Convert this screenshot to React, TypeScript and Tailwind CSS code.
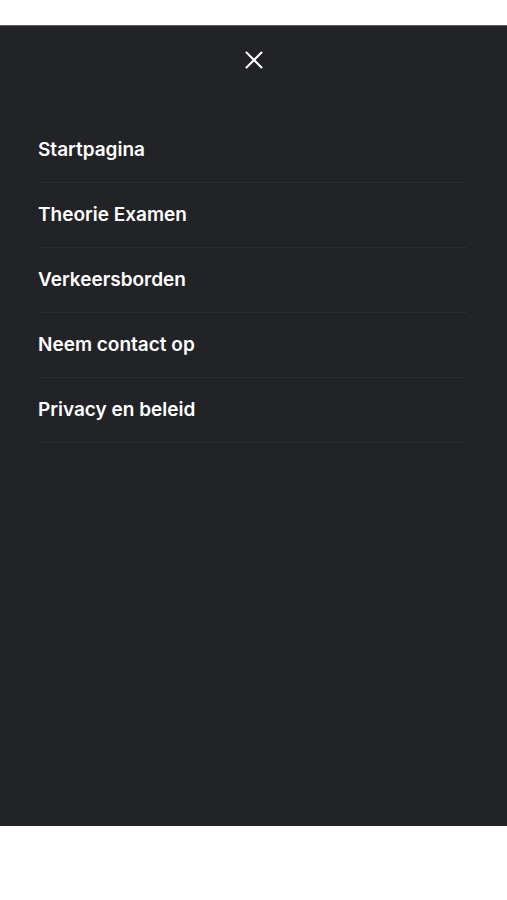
import { X } from "lucide-react"

const items = [
  "Startpagina",
  "Theorie Examen",
  "Verkeersborden",
  "Neem contact op",
  "Privacy en beleid",
]

export default function App() {
  return (
    <div className="h-[900px] bg-white pt-[25px] font-['Inter',sans-serif]">
      <div className="h-[801px] bg-[#222326] border-t border-[#5a5b5f]">
        {/* close */}
        <div className="flex justify-center pt-[19px]">
          <X className="text-white" size={30} strokeWidth={1.6} />
        </div>
        {/* menu */}
        <ul className="mt-[43px] ml-[38px] mr-[40px]">
          {items.map((item) => (
            <li
              key={item}
              className="h-[65px] flex items-center border-b border-[#2c2d31] text-white text-[19px] font-semibold"
            >
              {item}
            </li>
          ))}
        </ul>
      </div>
    </div>
  )
}
